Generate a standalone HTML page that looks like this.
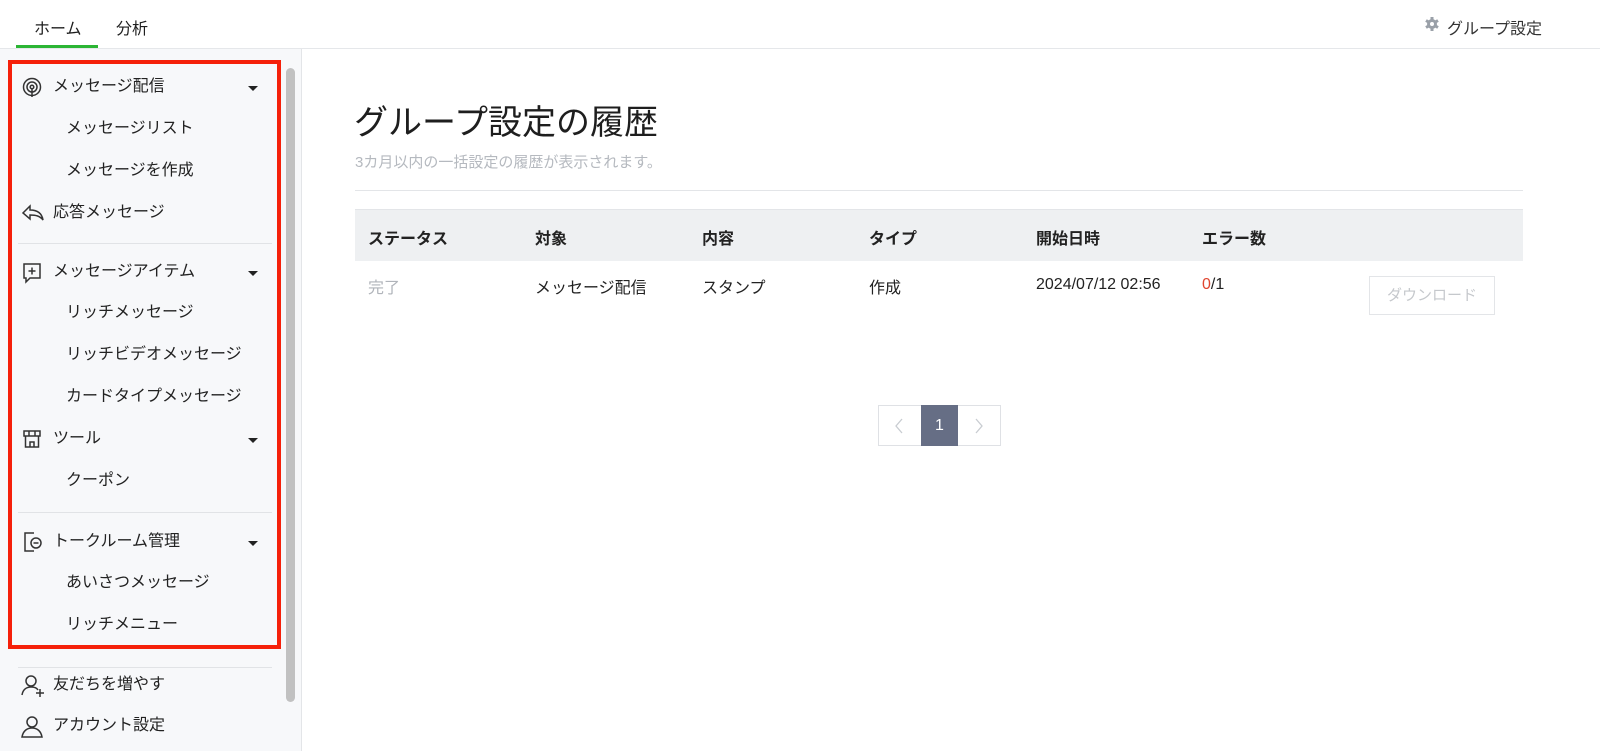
<!DOCTYPE html>
<html><head><meta charset="utf-8"><style>
*{margin:0;padding:0;box-sizing:border-box}
body{width:1600px;height:751px;overflow:hidden;background:#fff;font-family:"Liberation Sans","Noto Sans CJK JP",sans-serif;color:#1e1e1e;position:relative}
.a{position:absolute;white-space:nowrap}
.nav{position:absolute;left:0;top:0;width:1600px;height:49px;border-bottom:1px solid #e5e7ea;background:#fff}
.side{position:absolute;left:0;top:49px;width:302px;height:702px;background:#f7f8fa;border-right:1px solid #e3e5e8}
.it{position:absolute;font-size:16px;color:#222;white-space:nowrap;line-height:20px}
.sep{position:absolute;left:18px;width:254px;height:1px;background:#e1e3e6}
.car{position:absolute;left:248px;width:0;height:0;border-left:5px solid transparent;border-right:5px solid transparent;border-top:5px solid #222}
.th{position:absolute;top:225px;font-size:16px;font-weight:bold;color:#222}
.td{position:absolute;top:274px;font-size:16px;color:#222}
svg{position:absolute}
</style></head><body>
<div class="nav">
<div class="a" style="left:34px;top:15px;font-size:16px">ホーム</div>
<div class="a" style="left:16px;top:45px;width:82px;height:3px;background:#2bb534"></div>
<div class="a" style="left:116px;top:15px;font-size:16px">分析</div>
<svg style="left:1424px;top:16px" width="16" height="16" viewBox="0 0 16 16"><circle cx="8" cy="8" r="5" fill="#9aa0a8"/><g stroke="#9aa0a8" stroke-width="3"><line x1="8" y1="1" x2="8" y2="15"/><line x1="2" y1="4.5" x2="14" y2="11.5"/><line x1="2" y1="11.5" x2="14" y2="4.5"/></g><circle cx="8" cy="8" r="2" fill="#fff"/></svg>
<div class="a" style="left:1447px;top:15px;font-size:16px;color:#333">グループ設定</div>
</div>
<div class="side">
<div class="a" style="left:286px;top:19px;width:9px;height:634px;background:#c1c1c1;border-radius:5px"></div>
</div>
<div class="a" style="left:8px;top:60px;width:273px;height:589px;border:4px solid #f5200a"></div>
<svg style="left:22px;top:77px" width="20" height="22" viewBox="0 0 20 22" fill="none" stroke="#333" stroke-width="1.5"><circle cx="10" cy="10" r="8.5"/><circle cx="10" cy="10" r="5"/><circle cx="10" cy="10" r="1.8"/><line x1="10" y1="12" x2="10" y2="20"/></svg>
<div class="it" style="left:53px;top:77px">メッセージ配信</div><div class="car" style="top:86px"></div>
<div class="it" style="left:66px;top:119px">メッセージリスト</div>
<div class="it" style="left:66px;top:161px">メッセージを作成</div>
<svg style="left:21px;top:203px" width="24" height="20" viewBox="0 0 24 20" fill="none" stroke="#333" stroke-width="1.5"><path d="M9 3L2 10l7 6V12c6 0 10 1 13 5-1-6-5-10-13-10V3z"/></svg>
<div class="it" style="left:53px;top:203px">応答メッセージ</div>
<div class="sep" style="top:243px"></div>
<svg style="left:22px;top:262px" width="20" height="22" viewBox="0 0 20 22" fill="none" stroke="#333" stroke-width="1.5"><path d="M2 2h16v14H8l-4 4v-4H2z"/><path d="M10 5.5v7M6.5 9h7"/></svg>
<div class="it" style="left:53px;top:262px">メッセージアイテム</div><div class="car" style="top:271px"></div>
<div class="it" style="left:66px;top:303px">リッチメッセージ</div>
<div class="it" style="left:66px;top:345px">リッチビデオメッセージ</div>
<div class="it" style="left:66px;top:387px">カードタイプメッセージ</div>
<svg style="left:22px;top:429px" width="20" height="20" viewBox="0 0 20 20" fill="none" stroke="#333" stroke-width="1.5"><path d="M2 2h16v5H2zM7 2v5M13 2v5M3.5 7v11h13V7M8 18v-5h4v5"/></svg>
<div class="it" style="left:53px;top:429px">ツール</div><div class="car" style="top:438px"></div>
<div class="it" style="left:66px;top:471px">クーポン</div>
<div class="sep" style="top:512px"></div>
<svg style="left:22px;top:531px" width="22" height="22" viewBox="0 0 22 22" fill="none" stroke="#333" stroke-width="1.5"><path d="M12 2H3v18h9"/><circle cx="14" cy="12" r="5"/><path d="M11.5 12h5"/></svg>
<div class="it" style="left:53px;top:532px">トークルーム管理</div><div class="car" style="top:541px"></div>
<div class="it" style="left:66px;top:573px">あいさつメッセージ</div>
<div class="it" style="left:66px;top:615px">リッチメニュー</div>
<div class="sep" style="top:667px"></div>
<svg style="left:20px;top:674px" width="26" height="24" viewBox="0 0 26 24" fill="none" stroke="#333" stroke-width="1.5"><circle cx="11" cy="7" r="5"/><path d="M2 21c1-6 5-8 9-8s6 1 7 3M16 19h8M20 15v8"/></svg>
<div class="it" style="left:53px;top:675px">友だちを増やす</div>
<svg style="left:20px;top:715px" width="26" height="24" viewBox="0 0 26 24" fill="none" stroke="#333" stroke-width="1.5"><circle cx="12" cy="7" r="5"/><path d="M2 22c1-6 5-9 10-9s9 3 10 9z"/></svg>
<div class="it" style="left:53px;top:716px">アカウント設定</div>
<div class="a" style="left:354px;top:95px;font-size:34px;color:#1e1e1e">グループ設定の履歴</div>
<div class="a" style="left:355px;top:151px;font-size:15px;color:#b5b9bf">3カ月以内の一括設定の履歴が表示されます。</div>
<div class="a" style="left:355px;top:190px;width:1168px;height:1px;background:#e3e5e8"></div>
<div class="a" style="left:355px;top:209px;width:1168px;height:52px;background:#eef0f2;border-top:1px solid #e3e5e8"></div>
<div class="th" style="left:368px">ステータス</div>
<div class="th" style="left:535px">対象</div>
<div class="th" style="left:702px">内容</div>
<div class="th" style="left:869px">タイプ</div>
<div class="th" style="left:1036px">開始日時</div>
<div class="th" style="left:1202px">エラー数</div>
<div class="td" style="left:368px;color:#b0b4ba">完了</div>
<div class="td" style="left:535px">メッセージ配信</div>
<div class="td" style="left:702px">スタンプ</div>
<div class="td" style="left:869px">作成</div>
<div class="td" style="left:1036px;top:276px">2024/07/12 02:56</div>
<div class="td" style="left:1202px;top:276px"><span style="color:#e0452f">0</span>/1</div>
<div class="a" style="left:1369px;top:276px;width:126px;height:39px;border:1px solid #e3e5e8;font-size:15px;color:#c5c8cc;text-align:center;line-height:37px">ダウンロード</div>
<div class="a" style="left:878px;top:405px;width:123px;height:41px;border:1px solid #dfe1e5;background:#fff"></div>
<div class="a" style="left:921px;top:405px;width:37px;height:41px;background:#666e85;color:#fff;font-size:16px;text-align:center;line-height:41px">1</div>
<svg style="left:894px;top:418px" width="10" height="16" viewBox="0 0 10 16" fill="none" stroke="#c8ccd1" stroke-width="1.3"><path d="M8 1L2 8l6 7"/></svg>
<svg style="left:974px;top:418px" width="10" height="16" viewBox="0 0 10 16" fill="none" stroke="#c8ccd1" stroke-width="1.3"><path d="M2 1l6 7-6 7"/></svg>
</body></html>
